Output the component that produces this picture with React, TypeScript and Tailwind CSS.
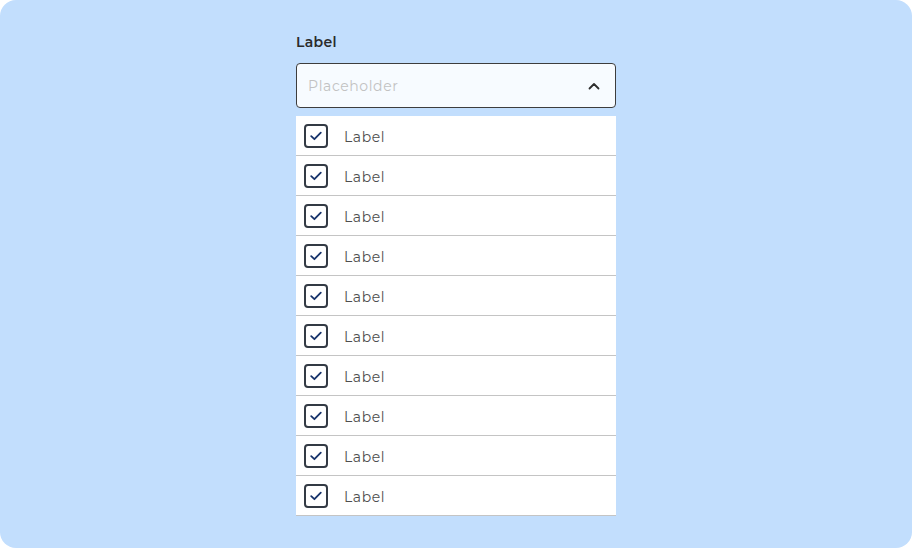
export default function App() {
  const rows = Array.from({ length: 10 });
  return (
    <div className="w-[912px] h-[548px] bg-white">
      <div
        className="w-full h-full rounded-2xl bg-[#c2defd] flex justify-center pt-[33px]"
        style={{ fontFamily: "Montserrat, Inter, 'Noto Sans', sans-serif" }}
      >
        <div className="w-[320px] flex flex-col">
          <div className="text-[14px] leading-[18px] font-semibold text-[#2b2b2b] tracking-[0.3px]">Label</div>
          <div className="mt-[12px] h-[45px] rounded-[4px] border border-[#3d3d3d] bg-[#f7fbff] flex items-center justify-between pl-[11px] pr-[14px]">
            <span className="text-[14px] text-[#c2c2c2] tracking-[0.6px] pt-[2px]">Placeholder</span>
            <svg width="14" height="14" viewBox="0 0 14 14" fill="none">
              <path d="M2.5 9.5L7 5L11.5 9.5" stroke="#2e2e2e" strokeWidth="1.8" strokeLinecap="round" strokeLinejoin="round" />
            </svg>
          </div>
          <div className="mt-[8px] bg-white flex flex-col">
            {rows.map((_, i) => (
              <div key={i} className="h-[40px] border-b border-[#c4c4c4] flex items-center pl-[8px] gap-[16px]">
                <div className="w-[24px] h-[24px] rounded-[4px] border-2 border-[#333a44] flex items-center justify-center">
                  <svg width="16" height="16" viewBox="0 0 16 16" fill="none">
                    <path d="M3.2 8.2L6.4 11.2L12.8 4.6" stroke="#16336b" strokeWidth="1.8" strokeLinecap="round" strokeLinejoin="round" />
                  </svg>
                </div>
                <span className="text-[14px] text-[#4e4e4e] tracking-[0.6px] pt-[3px]">Label</span>
              </div>
            ))}
          </div>
        </div>
      </div>
    </div>
  );
}
